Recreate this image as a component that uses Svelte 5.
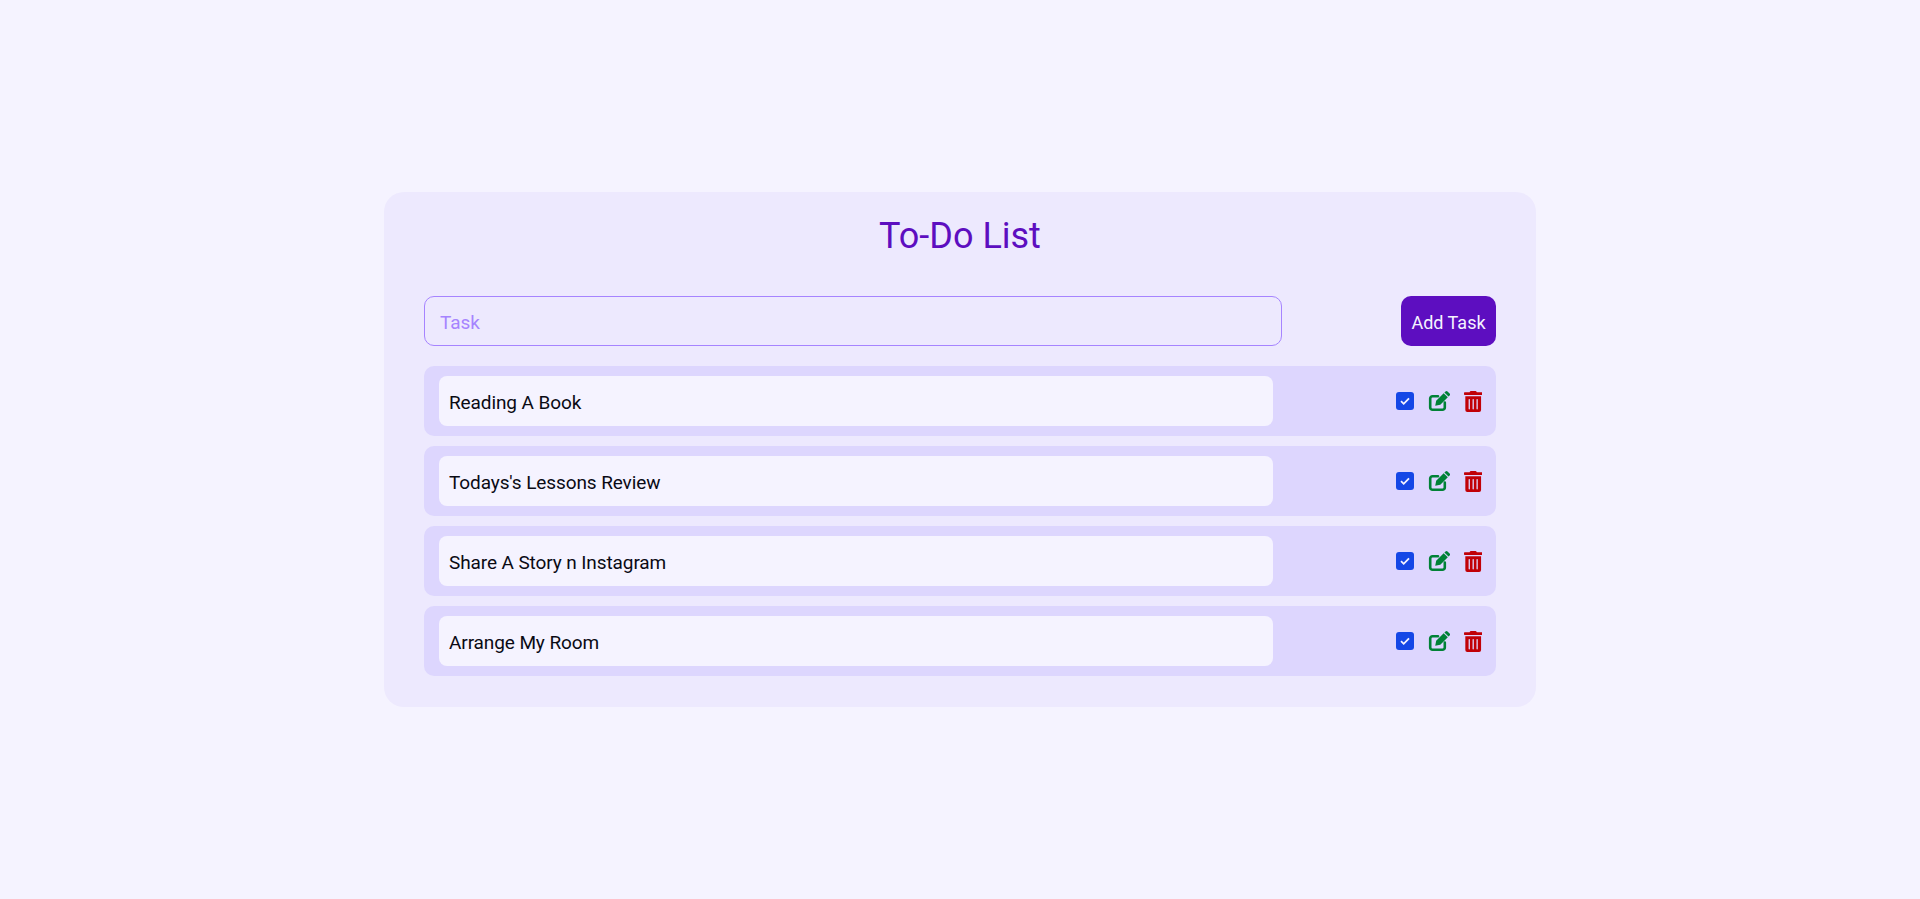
<script>
  const tasks = [
    'Reading A Book',
    "Todays's Lessons Review",
    'Share A Story n Instagram',
    'Arrange My Room'
  ];
</script>

<main class="page">
  <section class="card">
    <h1>To-Do List</h1>
    <form class="add" onsubmit={(e) => e.preventDefault()}>
      <input class="new-task" type="text" placeholder="Task" />
      <button type="submit">Add Task</button>
    </form>
    <ul>
      {#each tasks as task}
        <li>
          <input class="task" type="text" value={task} readonly />
          <div class="actions">
            <span class="check">
              <svg viewBox="0 0 12 12" width="12" height="12" aria-hidden="true">
                <path d="M2 6.200 4.700 8.800 10 3.400" fill="none" stroke="#f5f3ff" stroke-width="1.800" />
              </svg>
            </span>
            <svg class="edit" viewBox="0 0 22 22" width="22" height="22" aria-hidden="true">
              <path d="M10 6.200H4.500a2.300 2.300 0 0 0-2.300 2.300v9a2.300 2.300 0 0 0 2.300 2.300h10a2.300 2.300 0 0 0 2.300-2.300v-5" fill="none" stroke="currentColor" stroke-width="2.600" stroke-linecap="round" />
              <path d="M7.200 15.800 8.200 10.700 15.700 3.200 19.800 7.300 12.300 14.800Z" fill="currentColor" />
              <path d="M16.400 2.500 17.500 1.400a1.400 1.400 0 0 1 2 0l2.100 2.100a1.400 1.400 0 0 1 0 2l-1.100 1.100Z" fill="currentColor" />
            </svg>
            <svg class="trash" viewBox="0 0 448 512" width="18.400" height="21" aria-hidden="true">
              <path fill="currentColor" d="M32 464a48 48 0 0 0 48 48h288a48 48 0 0 0 48-48V128H32zm272-256a16 16 0 0 1 32 0v224a16 16 0 0 1-32 0zm-96 0a16 16 0 0 1 32 0v224a16 16 0 0 1-32 0zm-96 0a16 16 0 0 1 32 0v224a16 16 0 0 1-32 0zM432 32H312l-9.400-18.700A24 24 0 0 0 281.100 0H166.800a23.720 23.720 0 0 0-21.400 13.300L136 32H16A16 16 0 0 0 0 48v32a16 16 0 0 0 16 16h416a16 16 0 0 0 16-16V48a16 16 0 0 0-16-16z" />
            </svg>
          </div>
        </li>
      {/each}
    </ul>
  </section>
</main>

<style>
  :global(body) {
    margin: 0;
    background: #f5f3ff;
    font-family: Roboto, "Noto Sans", sans-serif;
  }
  .page {
    min-height: 899px;
    display: flex;
    justify-content: center;
    padding-top: 192px;
    box-sizing: border-box;
  }
  .card {
    width: 1152px;
    height: 515px;
    box-sizing: border-box;
    padding: 20px 40px 30px;
    background: #ede9fe;
    border-radius: 20px;
  }
  h1 {
    margin: 0 0 30px;
    height: 54px;
    line-height: 48px;
    text-align: center;
    font-size: 36px;
    font-weight: 400;
    color: #5d0ec0;
  }
  .add {
    display: flex;
    justify-content: space-between;
    margin-bottom: 20px;
  }
  input {
    font: inherit;
    font-size: 19px;
    letter-spacing: -0.1px;
    box-sizing: border-box;
    height: 50px;
    outline: none;
  }
  .new-task {
    width: 858px;
    padding: 2px 15px 0;
    background: #ede9fe;
    border: 1px solid #a684ff;
    border-radius: 10px;
  }
  .new-task::placeholder {
    color: #a684ff;
    opacity: 1;
  }
  button {
    width: 95px;
    height: 50px;
    padding: 2px 0 0;
    border: none;
    border-radius: 10px;
    background: #5d0ec0;
    color: #f5f3ff;
    font: inherit;
    font-size: 18px;
  }
  ul {
    list-style: none;
    margin: 0;
    padding: 0;
    display: flex;
    flex-direction: column;
    gap: 10px;
  }
  li {
    display: flex;
    align-items: center;
    justify-content: space-between;
    height: 70px;
    padding: 0 14px 0 15px;
    background: #ddd6fe;
    border-radius: 10px;
  }
  .task {
    width: 834px;
    padding: 2px 10px 0;
    border: none;
    border-radius: 8px;
    background: #f5f3ff;
    color: #0a0a14;
  }
  .actions {
    display: flex;
    align-items: center;
    gap: 14px;
  }
  .check {
    display: flex;
    align-items: center;
    justify-content: center;
    width: 18px;
    height: 18px;
    border-radius: 3px;
    background: #1447e6;
  }
  .edit { color: #008236; }
  .trash { color: #c10007; }
</style>
